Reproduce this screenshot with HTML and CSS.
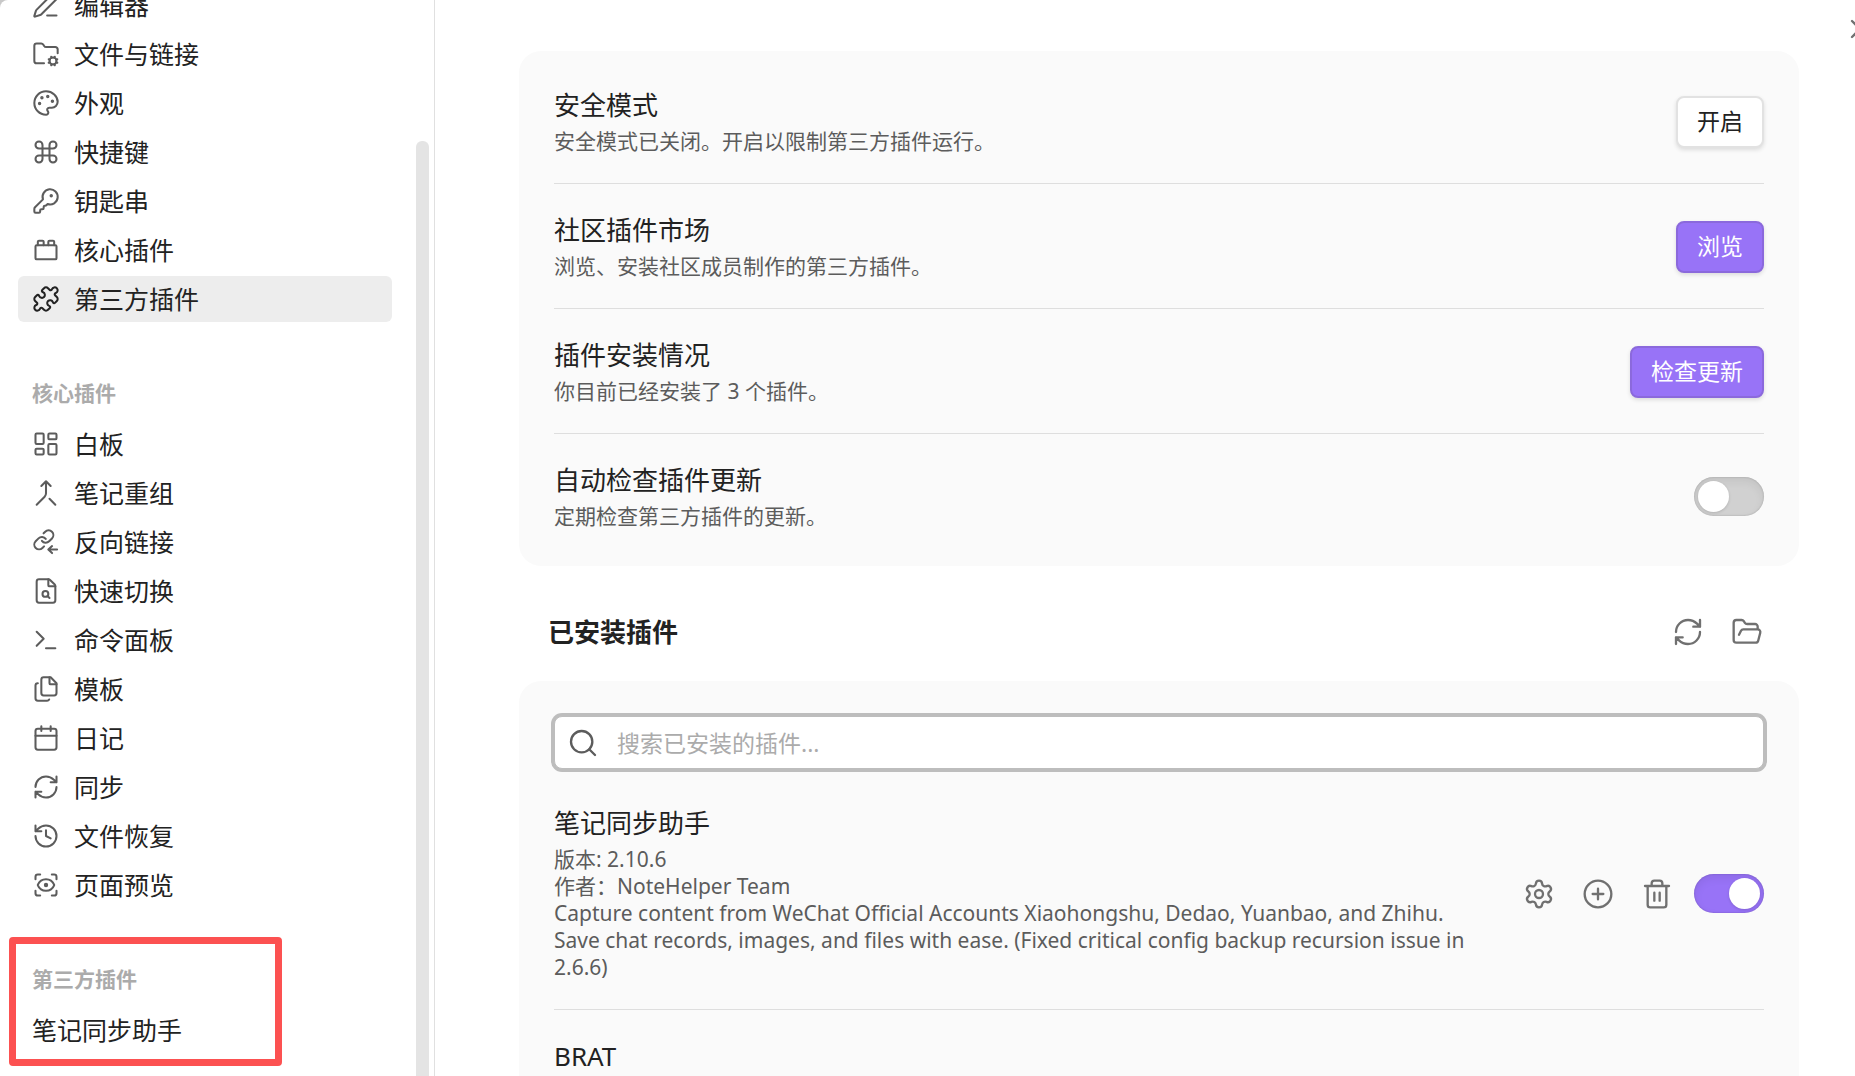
FILE: index.html
```html
<!DOCTYPE html>
<html lang="zh-CN">
<head>
<meta charset="utf-8">
<title>第三方插件</title>
<link rel="stylesheet" href="styles.css">
</head>
<body>
<div class="modal">
  <aside class="sidebar">
    <nav class="nav">
      <section class="group">
        <ul class="list">
          <li><a class="item" href="#"><svg class="icon" viewBox="0 0 24 24"><path d="M13 21h8"/><path d="M21.174 6.812a1 1 0 0 0-3.986-3.987L3.842 16.174a2 2 0 0 0-.5.83l-1.321 4.352a.5.5 0 0 0 .623.622l4.353-1.32a2 2 0 0 0 .83-.497z"/></svg>编辑器</a></li>
          <li><a class="item" href="#"><svg class="icon" viewBox="0 0 24 24"><path d="M10.3 20H4a2 2 0 0 1-2-2V5a2 2 0 0 1 2-2h3.9a2 2 0 0 1 1.69.9l.81 1.2a2 2 0 0 0 1.67.9H20a2 2 0 0 1 2 2v3.3"/><circle cx="18" cy="18" r="3"/><path d="m14.305 19.53.923-.382M15.228 16.852l-.923-.383M16.852 15.228l-.383-.923M16.852 20.772l-.383.924M19.148 15.228l.383-.923M19.53 21.696l-.382-.924M20.772 16.852l.924-.383M20.772 19.148l.924.383"/></svg>文件与链接</a></li>
          <li><a class="item" href="#"><svg class="icon" viewBox="0 0 24 24"><path d="M12 22a1 1 0 0 1 0-20 10 9 0 0 1 10 9 5 5 0 0 1-5 5h-2.25a1.75 1.75 0 0 0-1.4 2.8l.3.4a1.75 1.75 0 0 1-1.4 2.8z"/><circle class="dot" cx="13.5" cy="6.5" r=".6"/><circle class="dot" cx="17.5" cy="10.5" r=".6"/><circle class="dot" cx="6.5" cy="12.5" r=".6"/><circle class="dot" cx="8.5" cy="7.5" r=".6"/></svg>外观</a></li>
          <li><a class="item" href="#"><svg class="icon" viewBox="0 0 24 24"><path d="M15 6v12a3 3 0 1 0 3-3H6a3 3 0 1 0 3 3V6a3 3 0 1 0-3 3h12a3 3 0 1 0-3-3"/></svg>快捷键</a></li>
          <li><a class="item" href="#"><svg class="icon" viewBox="0 0 24 24"><path d="M2.586 17.414A2 2 0 0 0 2 18.828V21a1 1 0 0 0 1 1h3a1 1 0 0 0 1-1v-1a1 1 0 0 1 1-1h1a1 1 0 0 0 1-1v-1a1 1 0 0 1 1-1h.172a2 2 0 0 0 1.414-.586l.814-.814a6.5 6.5 0 1 0-4-4z"/><circle class="dot" cx="16.5" cy="7.5" r=".6"/></svg>钥匙串</a></li>
          <li><a class="item" href="#"><svg class="icon" viewBox="0 0 24 24"><rect x="3" y="8" width="18" height="12" rx="1"/><path d="M10 8V5c0-.6-.4-1-1-1H6a1 1 0 0 0-1 1v3M19 8V5c0-.6-.4-1-1-1h-3a1 1 0 0 0-1 1v3"/></svg>核心插件</a></li>
          <li><a class="item active" href="#" aria-current="page"><svg class="icon" viewBox="0 0 24 24"><path d="M19.439 7.85c-.049.322.059.648.289.878l1.568 1.568c.47.47.706 1.087.706 1.704s-.235 1.233-.706 1.704l-1.611 1.611a.98.98 0 0 1-.837.276c-.47-.07-.802-.48-.968-.925a2.501 2.501 0 1 0-3.214 3.214c.446.166.855.497.925.968a.979.979 0 0 1-.276.837l-1.61 1.61a2.404 2.404 0 0 1-1.705.707 2.402 2.402 0 0 1-1.704-.706l-1.568-1.568a1.026 1.026 0 0 0-.877-.29c-.493.074-.84.504-1.02.968a2.5 2.5 0 1 1-3.237-3.237c.464-.18.894-.527.967-1.02a1.026 1.026 0 0 0-.289-.877l-1.568-1.568A2.402 2.402 0 0 1 1.998 12c0-.617.236-1.234.706-1.704L4.23 8.77c.24-.24.581-.353.917-.303.515.077.877.528 1.073 1.01a2.5 2.5 0 1 0 3.259-3.259c-.482-.196-.933-.558-1.01-1.073-.05-.336.062-.676.303-.917l1.525-1.525A2.402 2.402 0 0 1 12 1.998c.617 0 1.234.236 1.704.706l1.568 1.568c.23.23.556.338.877.29.493-.074.84-.504 1.02-.968a2.5 2.5 0 1 1 3.237 3.237c-.464.18-.894.527-.967 1.02Z"/></svg>第三方插件</a></li>
        </ul>
      </section>
      <section class="group">
        <h2 class="group-title">核心插件</h2>
        <ul class="list">
          <li><a class="item" href="#"><svg class="icon" viewBox="0 0 24 24"><rect x="3" y="3" width="7" height="9" rx="1"/><rect x="14" y="3" width="7" height="5" rx="1"/><rect x="14" y="12" width="7" height="9" rx="1"/><rect x="3" y="16" width="7" height="5" rx="1"/></svg>白板</a></li>
          <li><a class="item" href="#"><svg class="icon" viewBox="0 0 24 24"><path d="m8 6 4-4 4 4M12 2v10.3a4 4 0 0 1-1.172 2.872L4 22M20 22l-5-5"/></svg>笔记重组</a></li>
          <li><a class="item" href="#"><svg class="icon" viewBox="0 0 24 24"><g class="chain" transform="translate(.3 .3) scale(.82)"><path d="M10 13a5 5 0 0 0 7.540.540l3-3a5 5 0 0 0-7.070-7.070l-1.720 1.710"/><path d="M14 11a5 5 0 0 0-7.540-.540l-3 3a5 5 0 0 0 7.070 7.070l1.710-1.710"/></g><path d="M21.500 18.500h-7.300M17.200 15.500l-3.200 3 3.200 3"/></svg>反向链接</a></li>
          <li><a class="item" href="#"><svg class="icon" viewBox="0 0 24 24"><path d="M6 22a2 2 0 0 1-2-2V4a2 2 0 0 1 2-2h8a2.400 2.400 0 0 1 1.704.706l3.588 3.588A2.400 2.400 0 0 1 20 8v12a2 2 0 0 1-2 2z"/><path d="M14 2v5a1 1 0 0 0 1 1h5"/><circle cx="11.500" cy="14.500" r="2.500"/><path d="M13.300 16.300 15 18"/></svg>快速切换</a></li>
          <li><a class="item" href="#"><svg class="icon" viewBox="0 0 24 24"><path d="m4 17 6-6-6-6M12 19h8"/></svg>命令面板</a></li>
          <li><a class="item" href="#"><svg class="icon" viewBox="0 0 24 24"><path d="M15 2v5a1 1 0 0 0 1 1h5"/><path d="M10 17.500a2 2 0 0 1-2-2V4a2 2 0 0 1 2-2h6l5 5v8.500a2 2 0 0 1-2 2z"/><path d="M5 7a2 2 0 0 0-2 2v11a2 2 0 0 0 2 2h8a2 2 0 0 0 1.700-1"/></svg>模板</a></li>
          <li><a class="item" href="#"><svg class="icon" viewBox="0 0 24 24"><path d="M8 2v4M16 2v4M3 10h18"/><rect x="3" y="4" width="18" height="18" rx="2"/></svg>日记</a></li>
          <li><a class="item" href="#"><svg class="icon" viewBox="0 0 24 24"><path d="M3 12a9 9 0 0 1 9-9 9.750 9.750 0 0 1 6.740 2.740L21 8M21 3v5h-5M21 12a9 9 0 0 1-9 9 9.750 9.750 0 0 1-6.740-2.740L3 16M8 16H3v5"/></svg>同步</a></li>
          <li><a class="item" href="#"><svg class="icon" viewBox="0 0 24 24"><path d="M3 12a9 9 0 1 0 9-9 9.750 9.750 0 0 0-6.740 2.740L3 8M3 3v5h5M12 7v5l4 2"/></svg>文件恢复</a></li>
          <li><a class="item" href="#"><svg class="icon" viewBox="0 0 24 24"><path d="M3 7V5a2 2 0 0 1 2-2h2M17 3h2a2 2 0 0 1 2 2v2M21 17v2a2 2 0 0 1-2 2h-2M7 21H5a2 2 0 0 1-2-2v-2"/><circle class="dot" cx="12" cy="12" r="1"/><path d="M18.944 12.330a1 1 0 0 0 0-.660 7.500 7.500 0 0 0-13.888 0 1 1 0 0 0 0 .660 7.500 7.500 0 0 0 13.888 0"/></svg>页面预览</a></li>
        </ul>
      </section>
      <section class="group marked">
        <h2 class="group-title">第三方插件</h2>
        <ul class="list">
          <li><a class="item" href="#">笔记同步助手</a></li>
        </ul>
      </section>
    </nav>
    <div class="track"><div class="thumb"></div></div>
  </aside>

  <main class="content">
    <button class="close" type="button" aria-label="关闭"><svg class="icon large" viewBox="0 0 24 24"><path d="M18 6 6 18M6 6l12 12"/></svg></button>

    <section class="card">
      <div class="row">
        <div class="info"><h3 class="name">安全模式</h3><p class="desc">安全模式已关闭。开启以限制第三方插件运行。</p></div>
        <button class="btn" type="button">开启</button>
      </div>
      <div class="row">
        <div class="info"><h3 class="name">社区插件市场</h3><p class="desc">浏览、安装社区成员制作的第三方插件。</p></div>
        <button class="btn primary" type="button">浏览</button>
      </div>
      <div class="row">
        <div class="info"><h3 class="name">插件安装情况</h3><p class="desc">你目前已经安装了 3 个插件。</p></div>
        <button class="btn primary" type="button">检查更新</button>
      </div>
      <div class="row">
        <div class="info"><h3 class="name"><label for="auto-update">自动检查插件更新</label></h3><p class="desc">定期检查第三方插件的更新。</p></div>
        <input class="toggle" type="checkbox" id="auto-update">
      </div>
    </section>

    <header class="heading">
      <h2 class="heading-title">已安装插件</h2>
      <div class="controls">
        <button class="icon-btn" type="button" aria-label="重新加载"><svg class="icon large" viewBox="0 0 24 24"><path d="M3 12a9 9 0 0 1 9-9 9.750 9.750 0 0 1 6.740 2.740L21 8M21 3v5h-5M21 12a9 9 0 0 1-9 9 9.750 9.750 0 0 1-6.740-2.740L3 16M8 16H3v5"/></svg></button>
        <button class="icon-btn" type="button" aria-label="打开插件文件夹"><svg class="icon large" viewBox="0 0 24 24"><path d="m6 14 1.500-2.900A2 2 0 0 1 9.240 10H20a2 2 0 0 1 1.940 2.500l-1.540 6a2 2 0 0 1-1.950 1.500H4a2 2 0 0 1-2-2V5a2 2 0 0 1 2-2h3.900a2 2 0 0 1 1.690.900l.810 1.200a2 2 0 0 0 1.670.900H18a2 2 0 0 1 2 2v2"/></svg></button>
      </div>
    </header>

    <section class="card installed">
      <div class="search">
        <svg class="icon large" viewBox="0 0 24 24"><circle cx="11" cy="11" r="8"/><path d="m21 21-4.340-4.340"/></svg>
        <input class="search-input" type="text" placeholder="搜索已安装的插件..." aria-label="搜索已安装的插件">
      </div>
      <div class="row">
        <div class="info">
          <h3 class="name"><label for="note-helper">笔记同步助手</label></h3>
          <p class="desc">版本: 2.10.6</p>
          <p class="desc">作者：NoteHelper Team</p>
          <p class="desc">Capture content from WeChat Official Accounts Xiaohongshu, Dedao, Yuanbao, and Zhihu. Save chat records, images, and files with ease. (Fixed critical config backup recursion issue in 2.6.6)</p>
        </div>
        <div class="controls">
          <button class="icon-btn" type="button" aria-label="选项"><svg class="icon large" viewBox="0 0 24 24"><path d="M9.671 4.136a2.340 2.340 0 0 1 4.659 0 2.340 2.340 0 0 0 3.319 1.915 2.340 2.340 0 0 1 2.330 4.033 2.340 2.340 0 0 0 0 3.831 2.340 2.340 0 0 1-2.330 4.033 2.340 2.340 0 0 0-3.319 1.915 2.340 2.340 0 0 1-4.659 0 2.340 2.340 0 0 0-3.320-1.915 2.340 2.340 0 0 1-2.330-4.033 2.340 2.340 0 0 0 0-3.831A2.340 2.340 0 0 1 6.350 6.051a2.340 2.340 0 0 0 3.319-1.915"/><circle cx="12" cy="12" r="3"/></svg></button>
          <button class="icon-btn" type="button" aria-label="快捷键"><svg class="icon large" viewBox="0 0 24 24"><circle cx="12" cy="12" r="10"/><path d="M8 12h8M12 8v8"/></svg></button>
          <button class="icon-btn" type="button" aria-label="卸载"><svg class="icon large" viewBox="0 0 24 24"><path d="M3 6h18M19 6v14a2 2 0 0 1-2 2H7a2 2 0 0 1-2-2V6M8 6V4a2 2 0 0 1 2-2h4a2 2 0 0 1 2 2v2M10 11v6M14 11v6"/></svg></button>
          <input class="toggle" type="checkbox" id="note-helper" checked>
        </div>
      </div>
      <div class="row">
        <div class="info"><h3 class="name">BRAT</h3></div>
      </div>
    </section>
  </main>
</div>
</body>
</html>
```
FILE: styles.css
```css
*,
*::before,
*::after {
  box-sizing: border-box;
}

body {
  margin: 0;
  background: #c8c8c8;
  color: #222;
  font-family: "Noto Sans", "Noto Sans CJK SC", sans-serif;
}

h2,
h3,
p,
ul {
  margin: 0;
  padding: 0;
}

button,
input {
  font-family: inherit;
}

.modal {
  display: flex;
  height: 100vh;
  overflow: hidden;
  background: #fff;
  border-top-left-radius: 8px;
}

.icon {
  flex: none;
  width: 28px;
  height: 28px;
  fill: none;
  stroke: currentColor;
  stroke-width: 1.75;
  stroke-linecap: round;
  stroke-linejoin: round;
}

.icon.large {
  width: 32px;
  height: 32px;
}

.dot {
  fill: currentColor;
}

.chain {
  stroke-width: 2.13;
}

/* Sidebar */

.sidebar {
  display: flex;
  flex: none;
  width: 435px;
  padding: 0 5px 0 18px;
  border-right: 1px solid #e0e0e0;
}

/* The list is scrolled part of a row past its top */
.nav {
  flex: 1;
  margin-top: -18px;
  padding-right: 24px;
}

.group + .group {
  margin-top: 57px;
}

.group-title {
  margin-bottom: 14px;
  padding-left: 14px;
  color: #ababab;
  font-size: 21px;
  font-weight: 700;
  line-height: 28px;
}

.list {
  display: grid;
  gap: 3px;
  list-style: none;
}

.item {
  display: flex;
  align-items: center;
  gap: 14px;
  height: 46px;
  padding: 0 14px;
  border-radius: 6px;
  color: #222;
  font-size: 25px;
  line-height: 32px;
  text-decoration: none;
}

.item .icon {
  color: #5c5c5c;
}

.item.active {
  background: #ededed;
}

.item.active .icon {
  color: #222;
}

.marked {
  position: relative;
}

.marked::after {
  position: absolute;
  top: -28px;
  bottom: -13px;
  left: -9px;
  width: 273px;
  border: 7px solid #fc5151;
  border-radius: 4px;
  content: "";
  pointer-events: none;
}

.track {
  flex: none;
  width: 13px;
  padding-top: 141px;
}

.thumb {
  height: 100%;
  border-radius: 6px 6px 0 0;
  background: #e4e4e4;
}

/* Content */

.content {
  position: relative;
  flex: 1;
  min-width: 0;
  padding: 51px 56px 0 84px;
  overflow: hidden;
}

.close {
  position: absolute;
  top: 13px;
  right: -21px;
  display: flex;
  padding: 0;
  border: 0;
  background: none;
  color: #707070;
}

.card {
  padding: 8px 35px;
  border-radius: 22px;
  background: #fafafa;
}

.card.installed {
  padding-top: 35px;
}

.row {
  display: flex;
  align-items: center;
  justify-content: space-between;
  gap: 36px;
  padding: 29px 0 28px;
}

.row + .row {
  border-top: 1px solid #dedede;
}

.name {
  margin-bottom: 6px;
  font-size: 26px;
  font-weight: 400;
  line-height: 34px;
}

.desc {
  color: #5c5c5c;
  font-size: 21px;
  line-height: 27px;
}

.btn {
  flex: none;
  height: 52px;
  padding: 0 19px 3px;
  border: 2px solid #e2e2e2;
  border-radius: 8px;
  background: #fff;
  box-shadow: 0 2px 4px rgba(0, 0, 0, 0.12);
  color: #222;
  font-size: 23px;
}

.btn.primary {
  border-color: #8b69dc;
  background: #9873f7;
  color: #fff;
}

.toggle {
  display: flex;
  flex: none;
  align-items: center;
  width: 70px;
  height: 39px;
  margin: 0;
  padding: 0 4px;
  border-radius: 20px;
  appearance: none;
  background: #d1d1d1;
  box-shadow: inset 0 4px 10px rgba(0, 0, 0, 0.07), inset 0 0 2px rgba(0, 0, 0, 0.21);
}

.toggle::before {
  width: 31px;
  height: 31px;
  border-radius: 50%;
  background: #fff;
  box-shadow: 0 1px 3px rgba(0, 0, 0, 0.15);
  content: "";
}

.toggle:checked {
  justify-content: flex-end;
  background: #9873f7;
}

.heading {
  display: flex;
  align-items: center;
  justify-content: space-between;
  padding: 45px 30px 28px 29px;
}

.heading-title {
  font-size: 26px;
  font-weight: 700;
  line-height: 34px;
}

.controls {
  display: flex;
  flex: none;
  align-items: center;
  gap: 15px;
}

.icon-btn {
  display: flex;
  justify-content: center;
  width: 44px;
  padding: 5px 0;
  border: 0;
  background: none;
  color: #707070;
}

.search {
  display: flex;
  align-items: center;
  gap: 18px;
  height: 53px;
  margin-bottom: 8px;
  padding: 0 12px;
  border: 1px solid #bdbdbd;
  border-radius: 8px;
  background: #fff;
  box-shadow: 0 0 0 3px #bdbdbd;
  color: #5c5c5c;
}

.search-input {
  flex: 1;
  min-width: 0;
  padding: 0;
  border: 0;
  outline: 0;
  background: none;
  color: #222;
  font-size: 23px;
}

.search-input::placeholder {
  color: #ababab;
}
```
